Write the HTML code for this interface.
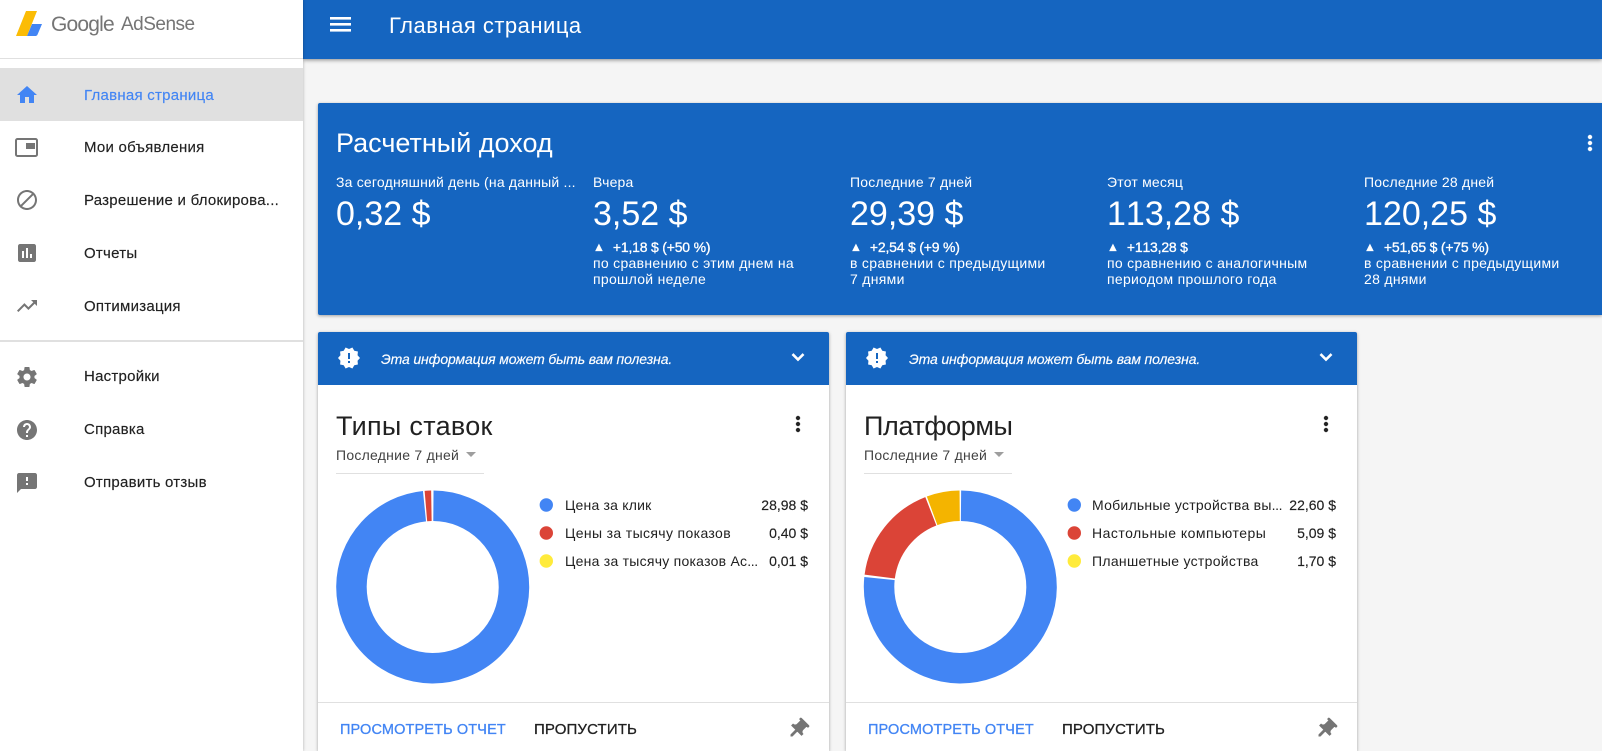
<!DOCTYPE html>
<html lang="ru"><head><meta charset="utf-8"><title>Google AdSense</title>
<style>
html,body{margin:0;padding:0;width:1602px;height:751px;overflow:hidden;background:#f5f5f5;font-family:"Liberation Sans",sans-serif;}
#root{position:absolute;left:0;top:0;width:1602px;height:751px;overflow:hidden;background:#f5f5f5;}
.a{position:absolute;white-space:nowrap;}
.t{position:absolute;white-space:nowrap;line-height:20px;height:20px;}
svg{position:absolute;display:block;}
#side{position:absolute;left:0;top:0;width:303px;height:751px;background:#fff;box-shadow:0 0 3px rgba(0,0,0,.3);z-index:3;}
#head{position:absolute;left:303px;top:0;right:0;height:59px;background:#1565c0;box-shadow:0 1px 4px rgba(0,0,0,.45);z-index:2;}
#hero{position:absolute;left:318px;top:103px;width:1284px;height:212px;background:#1565c0;border-radius:2px 0 0 2px;box-shadow:0 1px 3px rgba(0,0,0,.35);}
.card{position:absolute;top:332px;width:511px;height:419px;background:#fff;border-radius:2px 2px 0 0;box-shadow:0 1px 3px rgba(0,0,0,.35);}
.ban{position:absolute;left:0;top:0;width:511px;height:53px;background:#1565c0;border-radius:2px 2px 0 0;}
.nav{font-size:15px;color:#212121;left:84px;letter-spacing:.25px;-webkit-text-stroke:.15px #212121;}
.lab{font-size:14px;color:#fff;top:172px;letter-spacing:.2px;}
.val{font-size:34px;color:#fff;top:194px;line-height:40px;height:40px;font-kerning:none;}
.d{font-size:14px;color:#fff;letter-spacing:.3px;}
.dl{font-size:14px;color:#fff;-webkit-text-stroke:.3px #fff;letter-spacing:-.2px;font-kerning:none;}
.dl span{font-size:12px;margin-right:8px;letter-spacing:0;position:relative;top:-1px;}
.leg{font-size:14px;color:#212121;letter-spacing:.25px;}
.leg span{letter-spacing:-.4px;}
.num{font-size:14px;color:#212121;text-align:right;width:70px;-webkit-text-stroke:.15px #212121;}
.b1{left:22px;top:388px;font-size:14.500px;letter-spacing:.13px;color:#4285f4;-webkit-text-stroke:.3px #4285f4;}
.b2{left:216px;top:388px;font-size:15px;letter-spacing:.13px;color:#212121;-webkit-text-stroke:.3px #212121;}
.ital{left:63px;top:17px;font-size:14px;font-style:italic;color:#fff;letter-spacing:-.13px;-webkit-text-stroke:.15px #fff;}
.drop{left:18px;top:113px;font-size:14px;color:#424242;letter-spacing:.25px;}
.ct{left:18px;top:77px;font-size:27px;line-height:34px;color:#212121;}
</style></head><body>
<div id="root">

<div id="side">
<svg style="left:14px;top:9px" width="30" height="29" viewBox="0 0 30 29"><path d="M2 27L12 2H23L13 27z" fill="#fbbc05"/><path d="M18 15H28L23.500 25.600Q23 27 21 27H13z" fill="#4285f4"/></svg>
<div class="a" style="left:51px;top:10px;font-size:21px;line-height:30px;color:#757575;letter-spacing:-.8px">Google</div>
<div class="a" style="left:121px;top:10px;font-size:19px;line-height:30px;color:#757575;letter-spacing:-.5px">AdSense</div>
<div class="a" style="left:0;top:58px;width:303px;height:1px;background:#e0e0e0"></div>
<div class="a" style="left:0;top:68px;width:303px;height:53px;background:#e0e0e0"></div>

<svg style="left:15px;top:83px" width="24" height="24" viewBox="0 0 24 24" fill="#4285f4"><path d="M10 20v-6h4v6h5v-8h3L12 3 2 12h3v8z"/></svg>
<div class="t nav" style="top:86px;color:#4285f4;-webkit-text-stroke-color:#4285f4">Главная страница</div>

<svg style="left:15px;top:138px" width="23" height="19" viewBox="0 0 23 19"><rect x="1" y="1" width="21" height="17" rx="1.500" fill="none" stroke="#757575" stroke-width="2"/><rect x="11" y="5" width="9" height="6" fill="#757575"/></svg>
<div class="t nav" style="top:138px">Мои объявления</div>

<svg style="left:15px;top:188px" width="24" height="24" viewBox="0 0 24 24" fill="#757575"><path d="M12 2C6.480 2 2 6.480 2 12s4.480 10 10 10 10-4.480 10-10S17.520 2 12 2zM4 12c0-4.420 3.580-8 8-8 1.850 0 3.550.63 4.900 1.690L5.690 16.900C4.630 15.550 4 13.850 4 12zm8 8c-1.850 0-3.550-.63-4.900-1.690L18.310 7.100C19.370 8.450 20 10.150 20 12c0 4.420-3.580 8-8 8z"/></svg>
<div class="t nav" style="top:191px">Разрешение и блокирова...</div>

<svg style="left:15px;top:241px" width="24" height="24" viewBox="0 0 24 24" fill="#757575"><path d="M19 3H5c-1.100 0-2 .9-2 2v14c0 1.100.9 2 2 2h14c1.100 0 2-.9 2-2V5c0-1.100-.9-2-2-2zM9 17H7v-7h2v7zm4 0h-2V7h2v10zm4 0h-2v-4h2v4z"/></svg>
<div class="t nav" style="top:244px">Отчеты</div>

<svg style="left:15px;top:294px" width="24" height="24" viewBox="0 0 24 24" fill="#757575"><path d="M16 6l2.290 2.290-4.880 4.880-4-4L2 16.590 3.410 18l6-6 4 4 6.300-6.290L22 12V6z"/></svg>
<div class="t nav" style="top:297px">Оптимизация</div>

<div class="a" style="left:0;top:340px;width:303px;height:2px;background:#e0e0e0"></div>

<svg style="left:15px;top:365px" width="24" height="24" viewBox="0 0 24 24" fill="#757575"><path d="M19.430 12.980c.04-.32.07-.64.07-.98s-.03-.66-.07-.98l2.110-1.650c.19-.15.24-.42.12-.64l-2-3.460c-.12-.22-.39-.3-.61-.22l-2.490 1c-.52-.4-1.080-.73-1.690-.98l-.38-2.650C14.460 2.180 14.250 2 14 2h-4c-.25 0-.46.18-.49.42l-.38 2.650c-.61.25-1.170.59-1.690.98l-2.490-1c-.23-.09-.49 0-.61.22l-2 3.460c-.13.22-.07.49.12.64l2.110 1.650c-.04.32-.07.65-.07.98s.03.66.07.98l-2.110 1.650c-.19.15-.24.42-.12.64l2 3.460c.12.22.39.3.61.22l2.490-1c.52.4 1.080.73 1.690.98l.38 2.650c.03.24.24.42.49.42h4c.25 0 .46-.18.49-.42l.38-2.650c.61-.25 1.170-.59 1.690-.98l2.490 1c.23.09.49 0 .61-.22l2-3.460c.12-.22.07-.49-.12-.64l-2.110-1.650zM12 15.500c-1.930 0-3.500-1.570-3.500-3.500s1.570-3.500 3.500-3.500 3.500 1.570 3.500 3.500-1.570 3.500-3.500 3.500z"/></svg>
<div class="t nav" style="top:367px">Настройки</div>

<svg style="left:15px;top:418px" width="24" height="24" viewBox="0 0 24 24" fill="#757575"><path d="M12 2C6.480 2 2 6.480 2 12s4.480 10 10 10 10-4.480 10-10S17.520 2 12 2zm1 17h-2v-2h2v2zm2.070-7.750l-.9.92C13.450 12.900 13 13.500 13 15h-2v-.5c0-1.100.45-2.100 1.170-2.830l1.240-1.260c.37-.36.59-.86.59-1.410 0-1.100-.9-2-2-2s-2 .9-2 2H8c0-2.210 1.790-4 4-4s4 1.790 4 4c0 .88-.36 1.680-.93 2.250z"/></svg>
<div class="t nav" style="top:420px">Справка</div>

<svg style="left:15px;top:471px" width="24" height="24" viewBox="0 0 24 24" fill="#757575"><path d="M20 2H4c-1.100 0-1.990.9-1.990 2L2 22l4-4h14c1.100 0 2-.9 2-2V4c0-1.100-.9-2-2-2zm-7 12h-2v-2h2v2zm0-4h-2V6h2v4z"/></svg>
<div class="t nav" style="top:473px">Отправить отзыв</div>
</div>

<div id="head">
<svg style="left:27px;top:17px" width="21" height="15" viewBox="0 0 21 15" fill="#fff"><rect x="0" y="0" width="21" height="2.600"/><rect x="0" y="6" width="21" height="2.600"/><rect x="0" y="12" width="21" height="2.600"/></svg>
<div class="a" style="left:86px;top:11px;font-size:22px;line-height:30px;color:#fff;letter-spacing:.5px">Главная страница</div>
</div>

<div id="hero"></div>
<div class="a" style="left:336px;top:126px;font-size:27px;line-height:34px;color:#fff">Расчетный доход</div>
<svg style="left:1578px;top:131px" width="24" height="24" viewBox="0 0 24 24" fill="#fff" stroke="#fff" stroke-width=".5"><path d="M12 8c1.100 0 2-.9 2-2s-.9-2-2-2-2 .9-2 2 .9 2 2 2zm0 2c-1.100 0-2 .9-2 2s.9 2 2 2 2-.9 2-2-.9-2-2-2zm0 6c-1.100 0-2 .9-2 2s.9 2 2 2 2-.9 2-2-.9-2-2-2z"/></svg>

<div class="t lab" style="left:336px">За сегодняшний день (на данный ...</div>
<div class="t val" style="left:336px">0,32 $</div>

<div class="t lab" style="left:593px">Вчера</div>
<div class="t val" style="left:593px">3,52 $</div>
<div class="t dl" style="left:593px;top:237px"><span>▲</span>+1,18 $ (+50 %)</div>
<div class="t d" style="left:593px;top:253px">по сравнению с этим днем на</div>
<div class="t d" style="left:593px;top:269px">прошлой неделе</div>

<div class="t lab" style="left:850px">Последние 7 дней</div>
<div class="t val" style="left:850px">29,39 $</div>
<div class="t dl" style="left:850px;top:237px"><span>▲</span>+2,54 $ (+9 %)</div>
<div class="t d" style="left:850px;top:253px">в сравнении с предыдущими</div>
<div class="t d" style="left:850px;top:269px">7 днями</div>

<div class="t lab" style="left:1107px">Этот месяц</div>
<div class="t val" style="left:1107px">113,28 $</div>
<div class="t dl" style="left:1107px;top:237px"><span>▲</span>+113,28 $</div>
<div class="t d" style="left:1107px;top:253px">по сравнению с аналогичным</div>
<div class="t d" style="left:1107px;top:269px">периодом прошлого года</div>

<div class="t lab" style="left:1364px">Последние 28 дней</div>
<div class="t val" style="left:1364px">120,25 $</div>
<div class="t dl" style="left:1364px;top:237px"><span>▲</span>+51,65 $ (+75 %)</div>
<div class="t d" style="left:1364px;top:253px">в сравнении с предыдущими</div>
<div class="t d" style="left:1364px;top:269px">28 днями</div>

<!-- card 1 -->
<div class="card" style="left:318px">
<div class="ban"></div>
<svg style="left:19px;top:14px" width="24" height="24" viewBox="0 0 24 24" fill="#fff"><path d="M23 12l-2.440-2.780.34-3.680-3.610-.82-1.890-3.180L12 3 8.600 1.540 6.710 4.720l-3.610.81.34 3.680L1 12l2.440 2.780-.34 3.690 3.610.82 1.890 3.180L12 21l3.400 1.460 1.890-3.180 3.610-.82-.34-3.680L23 12zm-10 5h-2v-2h2v2zm0-4h-2V7h2v6z"/></svg>
<div class="t ital">Эта информация может быть вам полезна.</div>
<svg style="left:468px;top:13px" width="24" height="24" viewBox="0 0 24 24" fill="#fff" stroke="#fff" stroke-width=".6"><path d="M16.590 8.590L12 13.170 7.410 8.590 6 10l6 6 6-6z"/></svg>
<div class="a ct" style="letter-spacing:.3px">Типы ставок</div>
<svg style="left:468px;top:80px" width="24" height="24" viewBox="0 0 24 24" fill="#212121" stroke="#212121" stroke-width=".4"><path d="M12 8c1.100 0 2-.9 2-2s-.9-2-2-2-2 .9-2 2 .9 2 2 2zm0 2c-1.100 0-2 .9-2 2s.9 2 2 2 2-.9 2-2-.9-2-2-2zm0 6c-1.100 0-2 .9-2 2s.9 2 2 2 2-.9 2-2-.9-2-2-2z"/></svg>
<div class="t drop">Последние 7 дней</div>
<svg style="left:146px;top:120px" width="14" height="7" viewBox="0 0 14 7"><path d="M2 0h10L7 5z" fill="#9e9e9e"/></svg>
<div class="a" style="left:18px;top:141px;width:148px;height:1px;background:#e0e0e0"></div>
<svg style="left:10px;top:149px" width="210" height="212" viewBox="0 0 210 212" fill="none" stroke-width="30.500">
<g transform="translate(104.700 106)">
<circle r="81.250" pathLength="360" stroke="#4285f4" stroke-dasharray="354.100 360" transform="rotate(-89.500)"/>
<circle r="81.250" pathLength="360" stroke="#db4437" stroke-dasharray="3.900 360" transform="rotate(-94.800)"/>
</g></svg>
<svg style="left:221px;top:166px" width="16" height="72" viewBox="0 0 16 72"><circle cx="7.300" cy="7" r="6.700" fill="#4285f4"/><circle cx="7.300" cy="35" r="6.700" fill="#db4437"/><circle cx="7.300" cy="63" r="6.700" fill="#ffeb3b"/></svg>
<div class="t leg" style="left:247px;top:163px;letter-spacing:.2px">Цена за клик</div>
<div class="t leg" style="left:247px;top:191px;letter-spacing:.36px">Цены за тысячу показов</div>
<div class="t leg" style="left:247px;top:219px">Цена за тысячу показов Ас<span>...</span></div>
<div class="t num" style="left:420px;top:163px">28,98 $</div>
<div class="t num" style="left:420px;top:191px">0,40 $</div>
<div class="t num" style="left:420px;top:219px">0,01 $</div>
<div class="a" style="left:0;top:370px;width:511px;height:1px;background:#e0e0e0"></div>
<div class="t b1">ПРОСМОТРЕТЬ ОТЧЕТ</div>
<div class="t b2">ПРОПУСТИТЬ</div>
<svg style="left:468px;top:385px" width="24" height="24" viewBox="0 0 24 24" fill="#757575" stroke="#757575" stroke-width=".8"><path transform="rotate(45 12 12)" d="M16 9V4h1c.55 0 1-.45 1-1s-.45-1-1-1H7c-.55 0-1 .45-1 1s.45 1 1 1h1v5c0 1.660-1.340 3-3 3v2h5.970v7l1 1 1-1v-7H19v-2c-1.660 0-3-1.340-3-3z"/></svg>
</div>

<!-- card 2 -->
<div class="card" style="left:846px">
<div class="ban"></div>
<svg style="left:19px;top:14px" width="24" height="24" viewBox="0 0 24 24" fill="#fff"><path d="M23 12l-2.440-2.780.34-3.680-3.610-.82-1.890-3.180L12 3 8.600 1.540 6.710 4.720l-3.610.81.34 3.680L1 12l2.440 2.780-.34 3.690 3.610.82 1.890 3.180L12 21l3.400 1.460 1.890-3.180 3.610-.82-.34-3.680L23 12zm-10 5h-2v-2h2v2zm0-4h-2V7h2v6z"/></svg>
<div class="t ital">Эта информация может быть вам полезна.</div>
<svg style="left:468px;top:13px" width="24" height="24" viewBox="0 0 24 24" fill="#fff" stroke="#fff" stroke-width=".6"><path d="M16.590 8.590L12 13.170 7.410 8.590 6 10l6 6 6-6z"/></svg>
<div class="a ct" style="letter-spacing:-.4px">Платформы</div>
<svg style="left:468px;top:80px" width="24" height="24" viewBox="0 0 24 24" fill="#212121" stroke="#212121" stroke-width=".4"><path d="M12 8c1.100 0 2-.9 2-2s-.9-2-2-2-2 .9-2 2 .9 2 2 2zm0 2c-1.100 0-2 .9-2 2s.9 2 2 2 2-.9 2-2-.9-2-2-2zm0 6c-1.100 0-2 .9-2 2s.9 2 2 2 2-.9 2-2-.9-2-2-2z"/></svg>
<div class="t drop">Последние 7 дней</div>
<svg style="left:146px;top:120px" width="14" height="7" viewBox="0 0 14 7"><path d="M2 0h10L7 5z" fill="#9e9e9e"/></svg>
<div class="a" style="left:18px;top:141px;width:148px;height:1px;background:#e0e0e0"></div>
<svg style="left:10px;top:149px" width="210" height="212" viewBox="0 0 210 212" fill="none" stroke-width="30.500">
<g transform="translate(104.300 106)">
<circle r="81.250" pathLength="360" stroke="#4285f4" stroke-dasharray="275.800 360" transform="rotate(-89.500)"/>
<circle r="81.250" pathLength="360" stroke="#db4437" stroke-dasharray="61.400 360" transform="rotate(187.400)"/>
<circle r="81.250" pathLength="360" stroke="#f4b400" stroke-dasharray="19.900 360" transform="rotate(249.700)"/>
</g></svg>
<svg style="left:221px;top:166px" width="16" height="72" viewBox="0 0 16 72"><circle cx="7.300" cy="7" r="6.700" fill="#4285f4"/><circle cx="7.300" cy="35" r="6.700" fill="#db4437"/><circle cx="7.300" cy="63" r="6.700" fill="#ffeb3b"/></svg>
<div class="t leg" style="left:246px;top:163px;letter-spacing:.25px">Мобильные устройства вы<span>...</span></div>
<div class="t leg" style="left:246px;top:191px;letter-spacing:.48px">Настольные компьютеры</div>
<div class="t leg" style="left:246px;top:219px;letter-spacing:.3px">Планшетные устройства</div>
<div class="t num" style="left:420px;top:163px">22,60 $</div>
<div class="t num" style="left:420px;top:191px">5,09 $</div>
<div class="t num" style="left:420px;top:219px">1,70 $</div>
<div class="a" style="left:0;top:370px;width:511px;height:1px;background:#e0e0e0"></div>
<div class="t b1">ПРОСМОТРЕТЬ ОТЧЕТ</div>
<div class="t b2">ПРОПУСТИТЬ</div>
<svg style="left:468px;top:385px" width="24" height="24" viewBox="0 0 24 24" fill="#757575" stroke="#757575" stroke-width=".8"><path transform="rotate(45 12 12)" d="M16 9V4h1c.55 0 1-.45 1-1s-.45-1-1-1H7c-.55 0-1 .45-1 1s.45 1 1 1h1v5c0 1.660-1.340 3-3 3v2h5.970v7l1 1 1-1v-7H19v-2c-1.660 0-3-1.340-3-3z"/></svg>
</div>

</div>
</body></html>
